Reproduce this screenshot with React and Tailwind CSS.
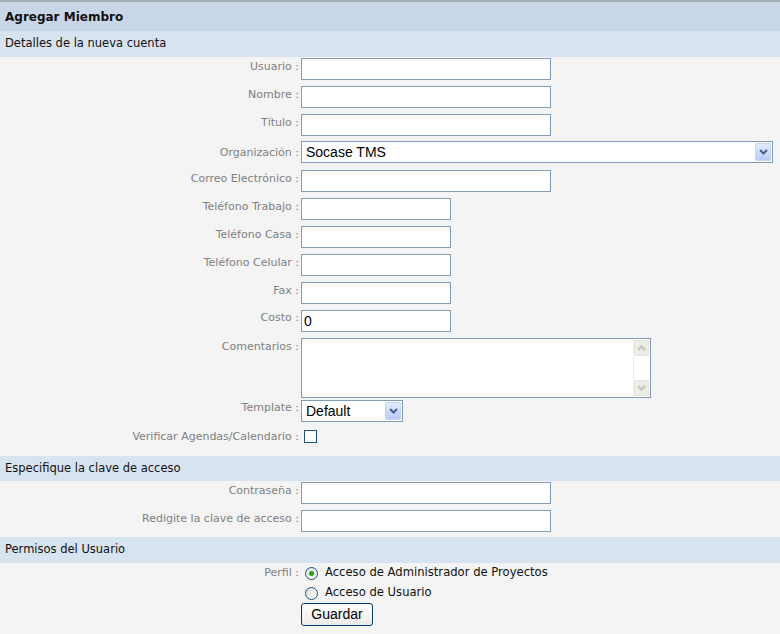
import React from "react";

const Label = ({ children, pt = "pt-[3px]" }) => (
  <div className={`w-[299px] shrink-0 text-right text-[11px] leading-[13px] text-[#808080] ${pt}`}>
    {children} :
  </div>
);

const Input = ({ w = "w-[250px]", value = "" }) => (
  <div className={`${w} mt-[1px] h-[22px] border border-[#7f9db9] bg-white flex items-center px-[2px] text-[14px] text-black font-['Liberation_Sans',sans-serif]`}>
    {value}
  </div>
);

const Arrow = ({ color = "#4d6185" }) => (
  <svg width="9" height="6" viewBox="0 0 9 6">
    <path d="M1 1 L4.5 4.5 L8 1" fill="none" stroke={color} strokeWidth="2" />
  </svg>
);

const SelectBox = ({ w, value, mt = "" }) => (
  <div className={`${w} ${mt} h-[22px] border border-[#7f9db9] bg-white flex items-center pl-[4px] pr-[1px] text-[14px] text-black font-['Liberation_Sans',sans-serif]`}>
    <span className="flex-1">{value}</span>
    <div className="w-[16px] h-[18px] rounded-[2px] border border-[#c3d3fd] bg-gradient-to-b from-[#e3ebfe] to-[#b9cbf7] flex items-center justify-center">
      <Arrow />
    </div>
  </div>
);

const Row = ({ label, children, h = "h-[28px]", pt }) => (
  <div className={`flex ${h}`}>
    <Label pt={pt}>{label}</Label>
    <div className="pl-[2px]">{children}</div>
  </div>
);

const Section = ({ children, h = "h-[26px]" }) => (
  <div className={`${h} bg-[#d8e3f0] flex items-center px-[5px] text-[11.5px] text-[#111]`}>{children}</div>
);

const Radio = ({ checked }) => (
  <div className="w-[13px] h-[13px] rounded-full border border-[#1c5180] bg-gradient-to-br from-[#dcdcd5] to-white flex items-center justify-center">
    {checked && <div className="w-[5px] h-[5px] rounded-full bg-[#21a121]" />}
  </div>
);

export default function App() {
  return (
    <div className="w-[780px] h-[634px] bg-[#f4f4f4] font-['DejaVu_Sans',sans-serif] border-t-2 border-[#a5adb9] overflow-hidden">
      <div className="h-[29px] bg-[#c9d6e8] flex items-center px-[5px] text-[12px] font-bold text-[#111]">Agregar Miembro</div>
      <Section>Detalles de la nueva cuenta</Section>
      <Row label="Usuario"><Input /></Row>
      <Row label="Nombre"><Input /></Row>
      <Row label="Título"><Input /></Row>
      <Row label="Organización" pt="pt-[5px]"><SelectBox w="w-[472px]" value="Socase TMS" /></Row>
      <Row label="Correo Electrónico"><Input /></Row>
      <Row label="Teléfono Trabajo"><Input w="w-[150px]" /></Row>
      <Row label="Teléfono Casa"><Input w="w-[150px]" /></Row>
      <Row label="Teléfono Celular"><Input w="w-[150px]" /></Row>
      <Row label="Fax"><Input w="w-[150px]" /></Row>
      <Row label="Costo" pt="pt-[2px]"><Input w="w-[150px]" value="0" /></Row>
      <Row label="Comentarios" h="h-[62px]" pt="pt-[3px]">
        <div className="mt-[1px] w-[350px] h-[60px] border border-[#7f9db9] bg-white flex justify-end">
          <div className="w-[17px] h-full border-l border-[#ededed] flex flex-col justify-between py-[1px] pr-[1px]">
            <div className="h-[16px] rounded-[2px] bg-[#eeede5] border border-[#e4e3dc] flex items-center justify-center">
              <svg width="9" height="6" viewBox="0 0 9 6"><path d="M1 5 L4.5 1.5 L8 5" fill="none" stroke="#c4c3bd" strokeWidth="2" /></svg>
            </div>
            <div className="h-[16px] rounded-[2px] bg-[#eeede5] border border-[#e4e3dc] flex items-center justify-center">
              <Arrow color="#c4c3bd" />
            </div>
          </div>
        </div>
      </Row>
      <Row label="Template" h="h-[26px]" pt="pt-[2px]"><SelectBox w="w-[102px]" value="Default" mt="mt-[1px]" /></Row>
      <Row label="Verificar Agendas/Calendario" h="h-[31px]" pt="pt-[5px]">
        <div className="ml-[3px] mt-[5px] w-[13px] h-[13px] border border-[#1c5180] bg-white" />
      </Row>
      <Section h="h-[25px]">Especifique la clave de acceso</Section>
      <Row label="Contraseña"><Input /></Row>
      <Row label="Redigite la clave de acceso"><Input /></Row>
      <Section>Permisos del Usuario</Section>
      <div className="flex">
        <div className="w-[299px] shrink-0 text-right text-[11px] leading-[13px] text-[#808080] pt-[3px]">Perfil :</div>
        <div className="pl-[6px] flex flex-col">
          <div className="flex items-center gap-[7px] h-[20px] text-[11.6px] text-[#111]">
            <Radio checked />
            <span>Acceso de Administrador de Proyectos</span>
          </div>
          <div className="flex items-center gap-[7px] h-[20px] text-[11.6px] text-[#111]">
            <Radio />
            <span>Acceso de Usuario</span>
          </div>
          <div className="-ml-[4px] w-[72px] h-[23px] rounded-[3px] border border-[#003c74] bg-gradient-to-b from-white to-[#ecebe6] flex items-center justify-center text-[14px] text-black font-['Liberation_Sans',sans-serif]">
            Guardar
          </div>
        </div>
      </div>
    </div>
  );
}
